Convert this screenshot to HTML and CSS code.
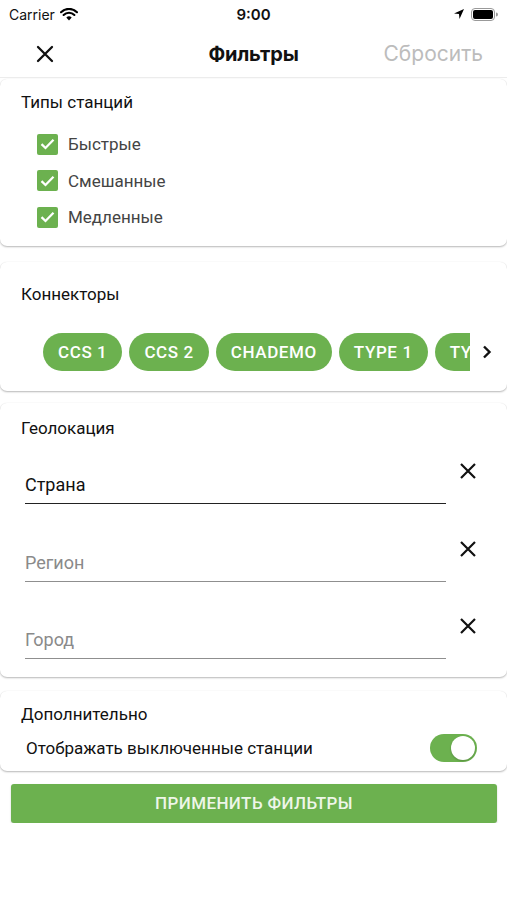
FILE: index.html
```html
<!DOCTYPE html>
<html lang="ru">
<head>
<meta charset="utf-8">
<title>Фильтры</title>
<link rel="stylesheet" href="styles.css">
</head>
<body>
<div class="status">
  <div class="status-left">
    <span class="carrier">Carrier</span>
    <svg class="wifi" width="18" height="13" viewBox="0 0 18 13"><path d="M9 12.5 L6.3 9.6 A3.9 3.9 0 0 1 11.7 9.6 Z" fill="#000"/><path d="M3.6 7 A7.7 7.7 0 0 1 14.4 7" fill="none" stroke="#000" stroke-width="2.1" stroke-linecap="round"/><path d="M1 4.2 A11.3 11.3 0 0 1 17 4.2" fill="none" stroke="#000" stroke-width="2.1" stroke-linecap="round"/></svg>
  </div>
  <div class="time">9:00</div>
  <div class="status-right">
    <svg width="12" height="12" viewBox="0 0 12 12"><path d="M11 1 L1 5.5 L6 6 L6.5 11 Z" fill="#000"/></svg>
    <svg width="27" height="13" viewBox="0 0 27 13"><rect x="0.5" y="0.5" width="23" height="12" rx="3.5" fill="none" stroke="#999" stroke-width="1"/><rect x="2" y="2" width="20" height="9" rx="2" fill="#000"/><path d="M25 4.5 v4 a2 2 0 0 0 0 -4 z" fill="#999"/></svg>
  </div>
</div>
<div class="nav">
  <svg class="nav-close" width="18" height="18" viewBox="0 0 18 18"><path d="M2 2 L16 16 M16 2 L2 16" stroke="#111" stroke-width="2.3" stroke-linecap="round"/></svg>
  <div class="nav-title">Фильтры</div>
  <div class="nav-reset">Сбросить</div>
</div>

<main class="content">
  <section class="card card-types">
    <h2 class="card-title">Типы станций</h2>
    <ul class="checks">
      <li class="check-row"><span class="checkbox"><svg width="15" height="12" viewBox="0 0 15 12"><path d="M1.5 6.2 L5.5 10 L13.5 1.8" fill="none" stroke="#fff" stroke-width="2.3"/></svg></span>Быстрые</li>
      <li class="check-row"><span class="checkbox"><svg width="15" height="12" viewBox="0 0 15 12"><path d="M1.5 6.2 L5.5 10 L13.5 1.8" fill="none" stroke="#fff" stroke-width="2.3"/></svg></span>Смешанные</li>
      <li class="check-row"><span class="checkbox"><svg width="15" height="12" viewBox="0 0 15 12"><path d="M1.5 6.2 L5.5 10 L13.5 1.8" fill="none" stroke="#fff" stroke-width="2.3"/></svg></span>Медленные</li>
    </ul>
  </section>

  <section class="card card-connectors">
    <h2 class="card-title">Коннекторы</h2>
    <div class="chips-row">
      <div class="chips">
        <span class="chip">CCS 1</span>
        <span class="chip">CCS 2</span>
        <span class="chip">CHADEMO</span>
        <span class="chip">TYPE 1</span>
        <span class="chip">TYPE 2</span>
      </div>
      <svg class="chev" width="10" height="14" viewBox="0 0 10 14"><path d="M2 1.5 L7.5 7 L2 12.5" fill="none" stroke="#111" stroke-width="2.4"/></svg>
    </div>
  </section>

  <section class="card card-geo">
    <h2 class="card-title">Геолокация</h2>
    <div class="field">
      <div class="input filled">Страна</div>
      <div class="clear"><svg width="18" height="18" viewBox="0 0 18 18"><path d="M2 2 L16 16 M16 2 L2 16" stroke="#111" stroke-width="2.2"/></svg></div>
    </div>
    <div class="field">
      <div class="input">Регион</div>
      <div class="clear"><svg width="18" height="18" viewBox="0 0 18 18"><path d="M2 2 L16 16 M16 2 L2 16" stroke="#111" stroke-width="2.2"/></svg></div>
    </div>
    <div class="field">
      <div class="input">Город</div>
      <div class="clear"><svg width="18" height="18" viewBox="0 0 18 18"><path d="M2 2 L16 16 M16 2 L2 16" stroke="#111" stroke-width="2.2"/></svg></div>
    </div>
  </section>

  <section class="card card-extra">
    <h2 class="card-title">Дополнительно</h2>
    <div class="toggle-row">
      <span class="toggle-label">Отображать выключенные станции</span>
      <span class="toggle"><span class="knob"></span></span>
    </div>
  </section>

  <button class="apply">ПРИМЕНИТЬ ФИЛЬТРЫ</button>
</main>
</body>
</html>
```

FILE: styles.css
```css
* { box-sizing: border-box; }
html, body { margin: 0; padding: 0; background: #fff; }
body {
  width: 507px;
  font-family: Roboto, "Noto Sans", sans-serif;
  color: #111;
}

.status {
  height: 30px;
  display: flex;
  align-items: center;
  justify-content: space-between;
  padding: 0 9px 2px 9px;
  font-family: Inter, "Liberation Sans", sans-serif;
}
.status-left { display: flex; align-items: center; gap: 5px; width: 120px; }
.carrier { font-size: 14px; }
.time { font-size: 15px; font-weight: 600; }
.status-right { display: flex; align-items: center; gap: 6px; width: 120px; justify-content: flex-end; }

.nav {
  height: 48px;
  display: grid;
  grid-template-columns: 130px 1fr 130px;
  align-items: center;
  padding: 0 24px;
  border-bottom: 1px solid #ececec;
  font-family: Inter, "Liberation Sans", sans-serif;
}
.nav-close { display: block; margin-left: 12px; }
.nav-title { text-align: center; font-size: 20px; font-weight: 700; color: #111; letter-spacing: -0.2px; }
.nav-reset { text-align: right; font-size: 21px; color: #bcbcbc; white-space: nowrap; }

.content { display: flex; flex-direction: column; }

.card {
  background: #fff;
  border-radius: 7px;
  box-shadow: 0 1px 2px rgba(0,0,0,0.28), 0 0 1px rgba(0,0,0,0.08);
}
.card-title {
  margin: 0;
  font-size: 17px;
  line-height: 22px;
  font-weight: 400;
  color: #111;
  padding-left: 21px;
}

.card-types { margin-top: 1px; padding: 12px 0 10.5px; }
.checks { list-style: none; margin: 13px 0 0; padding: 0 0 0 37px; }
.check-row {
  height: 36.5px;
  display: flex;
  align-items: center;
  gap: 10px;
  font-size: 17px;
  color: #444;
}
.checkbox {
  width: 21px; height: 21px;
  border-radius: 2px;
  background: #6cb14f;
  display: flex; align-items: center; justify-content: center;
}

.card-connectors { margin-top: 16px; padding: 21px 0 20px; }
.chips-row { margin-top: 28px; display: flex; align-items: center; }
.chips {
  margin-left: 43px;
  width: 427px;
  overflow: hidden;
  display: flex;
  gap: 7px;
  white-space: nowrap;
}
.chip {
  flex: none;
  height: 38px;
  line-height: 38px;
  padding: 0 15px;
  border-radius: 19px;
  background: #6cb14f;
  color: #fff;
  font-size: 17px;
  font-weight: 500;
  letter-spacing: 0.6px;
}
.chev { margin-left: 12px; }

.card-geo { margin-top: 12px; padding: 14px 0 17.5px; }
.field { display: flex; align-items: flex-start; margin-top: 20.5px; }
.card-geo .card-title + .field { margin-top: 8px; }
.input {
  margin-left: 25px;
  width: 421px;
  padding: 28px 0 8px;
  line-height: 20px;
  font-size: 18px;
  color: #8a8a8a;
  border-bottom: 1.5px solid #8f8f8f;
}
.input.filled { color: #111; border-bottom: 1.5px solid #222; }
.clear { width: 44px; height: 48px; display: flex; align-items: center; justify-content: center; }

.card-extra { margin-top: 14px; padding: 12px 0 7px; }
.toggle-row {
  margin-top: 7px;
  height: 32px;
  display: flex;
  align-items: center;
  justify-content: space-between;
  padding: 0 30px 0 26px;
}
.toggle-label { font-size: 17px; color: #111; }
.toggle {
  width: 47px; height: 28px;
  border-radius: 14px;
  background: #6cb14f;
  display: flex; align-items: center; justify-content: flex-end;
  padding: 2px;
}
.knob {
  width: 24px; height: 24px;
  border-radius: 50%;
  background: #fff;
  box-shadow: 0 1px 2px rgba(0,0,0,0.2);
}

.apply {
  margin: 13px 10px 0 11px;
  height: 39px;
  border: none;
  border-radius: 3px;
  background: #6cb14f;
  color: #eef6e9;
  font-family: Roboto, "Noto Sans", sans-serif;
  font-size: 17px;
  font-weight: 500;
  letter-spacing: 0.4px;
  box-shadow: 0 1px 2px rgba(0,0,0,0.2);
}
```
